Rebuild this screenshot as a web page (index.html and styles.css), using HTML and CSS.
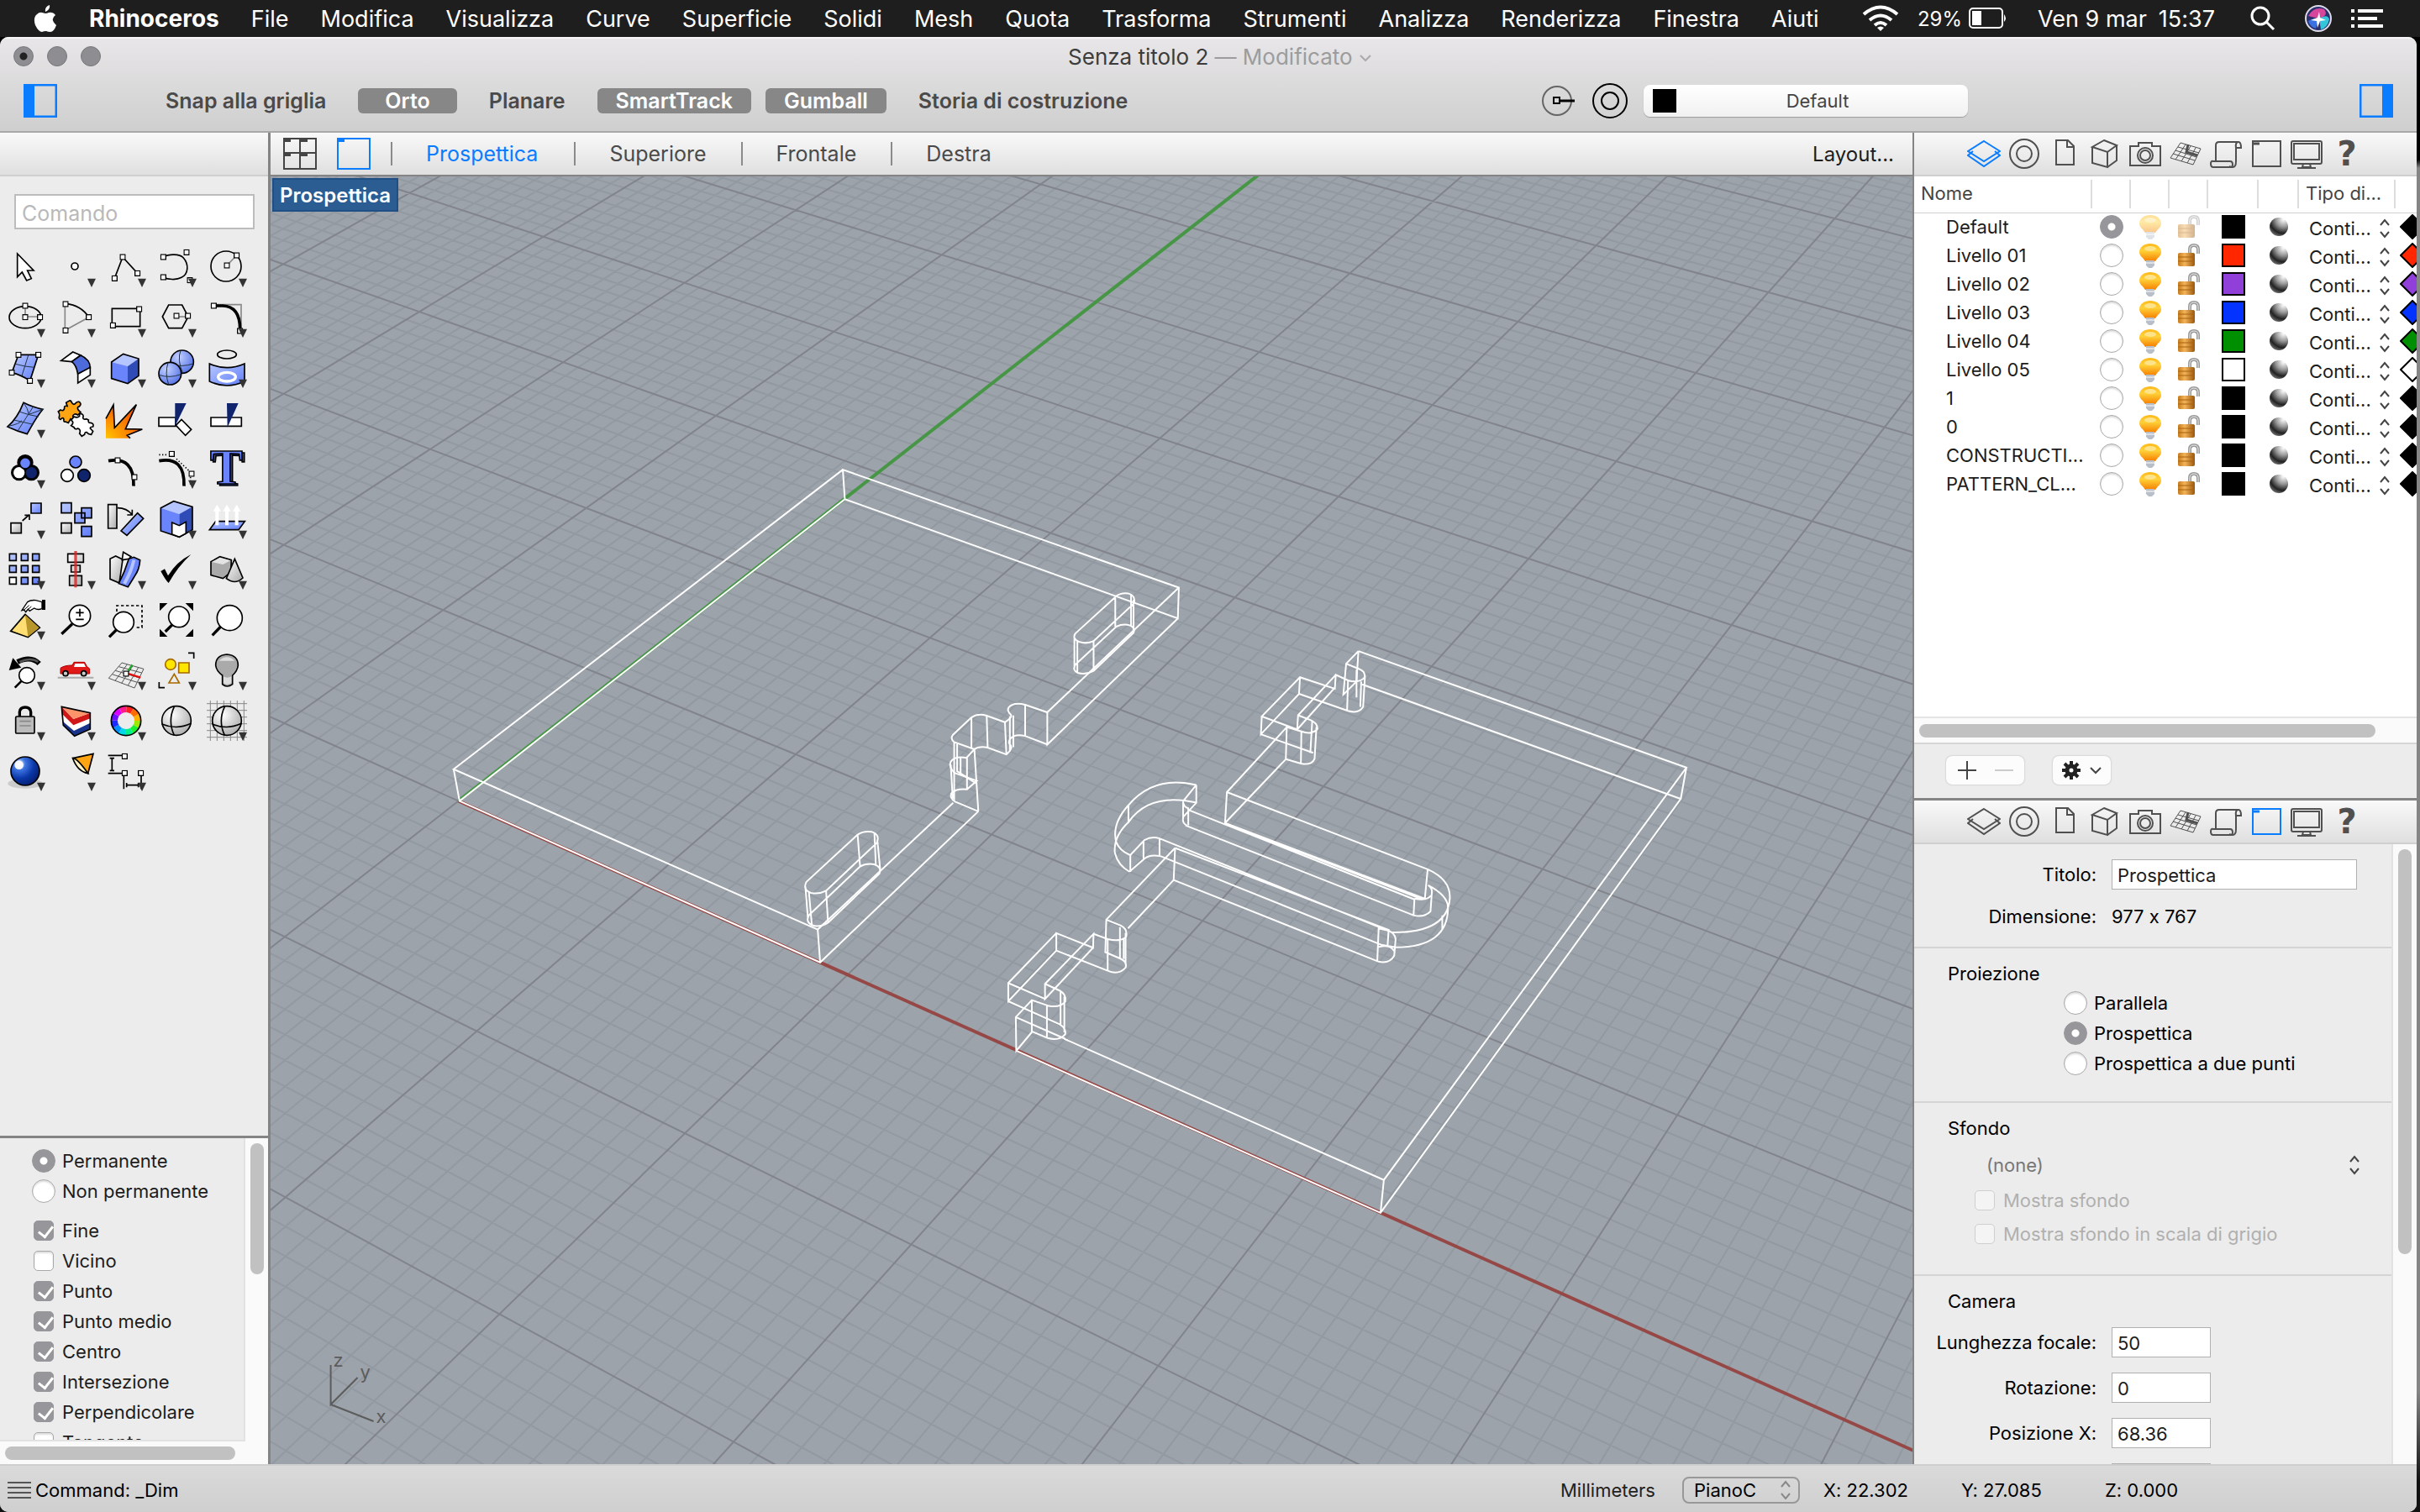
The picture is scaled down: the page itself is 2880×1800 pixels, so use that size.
FILE: index.html
```html
<!DOCTYPE html>
<html lang="it">
<head>
    <meta charset="utf-8">
    <title>Senza titolo 2</title>
    <link rel="stylesheet" href="styles.css">
</head>
<body>
    <!-- shared icons -->
    <svg class="defs" width="0" height="0">
        <defs>
            <linearGradient id="blue" x1="0" y1="0" x2="1" y2="1"><stop offset="0" stop-color="#b9c9ff"/><stop offset="1" stop-color="#5f7dfa"/></linearGradient>
            <linearGradient id="grey" x1="0" y1="0" x2="1" y2="1"><stop offset="0" stop-color="#fff"/><stop offset="1" stop-color="#aaa"/></linearGradient>
            <linearGradient id="bulbFill" x1="0" y1="0" x2="0" y2="1"><stop offset="0" stop-color="#ffb81a"/><stop offset="0.4" stop-color="#ffd23a"/><stop offset="1" stop-color="#f77f00"/></linearGradient>
            <linearGradient id="lockFill" x1="0" y1="0" x2="1" y2="0"><stop offset="0" stop-color="#c4791a"/><stop offset="0.4" stop-color="#f3b45a"/><stop offset="1" stop-color="#9a560c"/></linearGradient>
            <radialGradient id="ball" cx="0.35" cy="0.3" r="0.75"><stop offset="0" stop-color="#c4d2ff"/><stop offset="1" stop-color="#5472e6"/></radialGradient>
            <radialGradient id="ballGrey" cx="0.35" cy="0.3" r="0.8"><stop offset="0" stop-color="#fff"/><stop offset="1" stop-color="#a8a8a8"/></radialGradient>
            <radialGradient id="ballDark" cx="0.3" cy="0.25" r="0.85"><stop offset="0" stop-color="#fff"/><stop offset="0.25" stop-color="#3d74e0"/><stop offset="0.6" stop-color="#0a37a8"/><stop offset="1" stop-color="#041a66"/></radialGradient>
            <radialGradient id="sphere" cx="0.75" cy="0.1" r="1"><stop offset="0" stop-color="#fff"/><stop offset="0.4" stop-color="#999"/><stop offset="0.75" stop-color="#222"/><stop offset="1" stop-color="#777"/></radialGradient>
            <radialGradient id="burst" cx="0" cy="1" r="1"><stop offset="0" stop-color="#ffc400"/><stop offset="1" stop-color="#f95d00"/></radialGradient>
        </defs>
        <symbol id="dd" viewBox="0 0 180 180"><path d="M132 131h30l-15 31z" fill="#333"/></symbol>
        <symbol id="sq" viewBox="0 0 22 22"><rect x="2" y="2" width="18" height="18" fill="#fff" stroke="#000" stroke-width="4"/></symbol>
        <symbol id="layers" viewBox="0 0 40 40"><path d="M20 5L39 17 20 29 1 17zM7 17L1 22 20 35 39 22 33 17"/></symbol>
        <symbol id="target" viewBox="0 0 40 40"><circle cx="20" cy="20" r="17"/><circle cx="20" cy="20" r="9"/></symbol>
        <symbol id="page" viewBox="0 0 40 40"><path d="M10 4h14l7 7v22H10zM23 4v8h8"/></symbol>
        <symbol id="cube" viewBox="0 0 40 40"><path d="M19 4L34 10 23 18 5 12zM5 12V31L23 36V18M23 36L34 28V10"/></symbol>
        <symbol id="camera" viewBox="0 0 40 40"><path d="M2 11H12V7H28V11H38V34H2z"/><circle cx="20" cy="22" r="9"/><circle cx="20" cy="22" r="6"/></symbol>
        <symbol id="cplane" viewBox="0 0 40 40"><path stroke-width="1" d="M14 7L38 14 29 33 2 25zM20 9L8 27M26 11L15 29M32 13L22 31M11 12L36 19M8 16L33 24M5 20L31 28"/><path stroke-width="3" d="M23 9L21 18 34 22"/></symbol>
        <symbol id="scroll" viewBox="0 0 40 40"><path d="M8 29V10q0-4 4-4h23q3 0 3 7h-6v16q0 7-4 7H5q-3 0-3-4t3-3h20q3 0 3 4t-4 2M35 6q-4 0-3 7"/></symbol>
        <symbol id="win" viewBox="0 0 40 40"><rect x="4" y="5" width="33" height="30"/><path stroke-width="3" d="M5 8h7"/></symbol>
        <symbol id="monitor" viewBox="0 0 40 40"><rect x="2" y="5" width="36" height="27" rx="2"/><rect x="5" y="8" width="30" height="19"/><path d="M16 32l-1 4h10l-1-4M9 37h22"/></symbol>
        <symbol id="bulb" viewBox="0 0 28 30">
            <path d="M14 1C7 1 1 5 1 11q0 4 4 7l3 4h12l3-4q4-3 4-7C27 5 21 1 14 1z" fill="url(#bulbFill)"/>
            <ellipse cx="14" cy="7" rx="7" ry="3" fill="#ffe38a"/><path d="M9 21h10v6l-3 3h-4l-3-3z" fill="#b9bfc8"/><path d="M9 24h10" stroke="#fff"/>
        </symbol>
        <symbol id="lock" viewBox="0 0 28 28">
            <path d="M15 12V7q0-5 5-5t5 5v5" fill="none" stroke="#9a9a9a" stroke-width="4"/><path d="M15 12V7q0-5 5-5t5 5v5" fill="none" stroke="#eee" stroke-width="1"/>
            <rect x="1" y="11" width="20" height="16" rx="2" fill="url(#lockFill)"/><path d="M1 16h20M1 21h20" stroke="#a8630f"/>
        </symbol>
        <symbol id="mat" viewBox="0 0 24 24"><circle cx="12" cy="12" r="11" fill="url(#sphere)"/></symbol>
    </svg>

    <nav class="menubar">
        <svg class="apple" viewBox="0 0 28 34"><path fill="#fff" d="M19 1q1 5-5 8-1-6 5-8zM14 11q2 0 4-1 5-1 8 3-7 5 1 12-3 8-7 8-3 0-5-1-3 0-5 1-4 0-8-8-3-9 2-13 3-3 6-2z"/></svg>
        <a class="app" href="#">Rhinoceros</a>
        <a href="#">File</a>
        <a href="#">Modifica</a>
        <a href="#">Visualizza</a>
        <a href="#">Curve</a>
        <a href="#">Superficie</a>
        <a href="#">Solidi</a>
        <a href="#">Mesh</a>
        <a href="#">Quota</a>
        <a href="#">Trasforma</a>
        <a href="#">Strumenti</a>
        <a href="#">Analizza</a>
        <a href="#">Renderizza</a>
        <a href="#">Finestra</a>
        <a href="#">Aiuti</a>
        <div class="status">
            <svg width="44" height="32" viewBox="0 0 44 32" fill="none" stroke="#fff" stroke-width="4"><path d="M2 11q20-17 40 0M9 18q13-11 26 0M15 24q7-6 14 0"/><path d="M18 27q4-3 8 0l-4 4z" fill="#fff" stroke="none"/></svg>
            <span class="charge">29%</span>
            <svg class="battery" width="46" height="26" viewBox="0 0 46 26"><rect x="1" y="1" width="39" height="23" rx="4" fill="none" stroke="#fff" stroke-width="2"/><rect x="4" y="4" width="11" height="17" fill="#fff"/><path d="M42 8q4 5 0 9z" fill="#fff"/></svg>
            <span>Ven 9 mar</span>
            <span class="clock">15:37</span>
            <svg class="find" width="30" height="30" viewBox="0 0 30 30" fill="none" stroke="#fff" stroke-width="3"><circle cx="12" cy="12" r="10"/><path d="M19 19l9 9"/></svg>
            <svg class="siri" width="34" height="34" viewBox="0 0 34 34"><circle cx="17" cy="17" r="15" fill="#2b2f6e" stroke="#dcdcea" stroke-width="2"/><path d="M5 14Q12 2 24 6q6 8-7 11z" fill="#d6479c"/><path d="M18 17q10-6 12 1-2 10-10 12z" fill="#33c6d8"/><path d="M5 20q8-4 12-3l-3 12q-7-2-9-9z" fill="#3a72e0"/><path d="M18 9l1 7 7 3-7 1-3 8-1-8-7-1 8-3z" fill="#fff"/></svg>
            <svg width="38" height="22" viewBox="0 0 38 22"><path d="M0 2h4M8 2h30M0 11h4M8 11h23M0 20h4M8 20h30" stroke="#fff" stroke-width="4"/></svg>
        </div>
    </nav>

    <div class="window">
        <header class="titlebar">
            <div class="title-row">
                <div class="lights"><span class="light dirty"></span><span class="light"></span><span class="light"></span></div>
                <div class="title">Senza titolo 2 <span>— Modificato</span> <svg width="16" height="12" viewBox="0 0 16 12"><path d="M2 1l6 6 6-6" fill="none" stroke="#aaa" stroke-width="2"/></svg></div>
            </div>
            <div class="toolbar">
                <button class="panel-btn" aria-label="Pannello sinistro"><svg width="40" height="40" viewBox="0 0 40 40"><path d="M1 1h38v38H1z" fill="none" stroke="#0a7cff" stroke-width="3"/><path d="M0 0h13v40H0z" fill="#0a7cff"/></svg></button>
                <button class="mode">Snap alla griglia</button>
                <button class="mode on orto">Orto</button>
                <button class="mode">Planare</button>
                <button class="mode on">SmartTrack</button>
                <button class="mode on">Gumball</button>
                <button class="mode">Storia di costruzione</button>
                <div class="right-tools">
                    <svg width="42" height="42" viewBox="0 0 42 42" fill="none"><circle cx="19" cy="21" r="17" stroke="#666" stroke-width="2"/><rect x="15" y="17" width="7" height="7" stroke="#000" stroke-width="2"/><path d="M22 21h18" stroke="#000" stroke-width="3"/></svg>
                    <svg width="42" height="42" viewBox="0 0 42 42" fill="none" stroke="#000" stroke-width="2"><circle cx="21" cy="21" r="20"/><circle cx="21" cy="21" r="10"/></svg>
                    <button class="layer-btn"><i></i><span>Default</span></button>
                </div>
                <button class="panel-btn" aria-label="Pannello destro"><svg width="40" height="40" viewBox="0 0 40 40"><path d="M1 1h38v38H1z" fill="none" stroke="#0a7cff" stroke-width="3"/><path d="M27 0h13v40H27z" fill="#0a7cff"/></svg></button>
            </div>
        </header>

        <main class="work">
            <aside class="left">
                <div class="strip"></div>
                <div class="cmd"><input type="text" placeholder="Comando" aria-label="Comando"></div>
                <div class="tools">
                    <button><svg viewBox="0 0 180 180"><path d="M62 42V125L79 108 95 138 112 131 98 102H120z" fill="#fff"/></svg></button>
                    <button><svg viewBox="0 0 180 180"><circle cx="87" cy="87" r="12" fill="#fff"/><use href="#dd"/></svg></button>
                    <button><svg viewBox="0 0 180 180"><path d="M49 130L78 54 131 112"/><use href="#sq" x="38" y="119" width="22" height="22"/><use href="#sq" x="67" y="43" width="22" height="22"/><use href="#sq" x="120" y="101" width="22" height="22"/><use href="#dd"/></svg></button>
                    <button><svg viewBox="0 0 180 180"><path d="M43 54C60 44 100 40 115 57 135 80 133 115 108 127 90 137 60 135 43 126"/><use href="#sq" x="32" y="43" width="22" height="22"/><use href="#sq" x="32" y="115" width="22" height="22"/><use href="#sq" x="115" y="26" width="22" height="22"/><use href="#sq" x="127" y="126" width="22" height="22"/><use href="#dd"/></svg></button>
                    <button><svg viewBox="0 0 180 180"><circle cx="87" cy="87" r="54"/><path d="M90 84L125 48" stroke="#888"/><use href="#sq" x="79" y="73" width="22" height="22"/><use href="#sq" x="114" y="37" width="22" height="22"/><use href="#dd"/></svg></button>

                    <button><svg viewBox="0 0 180 180"><ellipse cx="90" cy="89" rx="57" ry="39"/><path d="M90 48V87H143" stroke="#888"/><use href="#sq" x="79" y="37" width="22" height="22"/><use href="#sq" x="79" y="78" width="22" height="22"/><use href="#sq" x="132" y="78" width="22" height="22"/><use href="#dd"/></svg></button>
                    <button><svg viewBox="0 0 180 180"><path d="M52 42V136L137 89" stroke="#888"/><path d="M54 40Q110 46 137 89"/><use href="#sq" x="43" y="31" width="22" height="22"/><use href="#sq" x="126" y="78" width="22" height="22"/><use href="#sq" x="43" y="125" width="22" height="22"/><use href="#dd"/></svg></button>
                    <button><svg viewBox="0 0 180 180"><path d="M40 58H140V122H40z"/><use href="#sq" x="126" y="49" width="22" height="22"/><use href="#sq" x="32" y="107" width="22" height="22"/><use href="#dd"/></svg></button>
                    <button><svg viewBox="0 0 180 180"><path d="M40 87L62 45H110L132 87 110 128H62z"/><path d="M90 87h40" stroke="#888"/><use href="#sq" x="79" y="73" width="22" height="22"/><use href="#sq" x="120" y="73" width="22" height="22"/><use href="#dd"/></svg></button>
                    <button><svg viewBox="0 0 180 180"><path d="M43 44H141V132" stroke="#888"/><path d="M43 48H75Q137 50 137 132" stroke-width="11"/><use href="#sq" x="32" y="37" width="22" height="22"/><use href="#sq" x="126" y="127" width="22" height="22"/><use href="#dd"/></svg></button>

                    <button><svg viewBox="0 0 180 180"><path d="M66 43H137L107 136Q75 115 42 107z" fill="url(#blue)"/><path d="M101 45L78 118M55 76Q90 86 122 88" stroke="#234" stroke-width="3"/><use href="#sq" x="55" y="32" width="22" height="22"/><use href="#sq" x="126" y="32" width="22" height="22"/><use href="#sq" x="96" y="125" width="22" height="22"/><use href="#sq" x="31" y="96" width="22" height="22"/><use href="#dd"/></svg></button>
                    <button><svg viewBox="0 0 180 180"><path d="M38 64L80 33 108 45 76 68z" fill="#fff"/><path d="M76 68L108 45Q142 60 142 90L98 112Q92 78 76 68z" fill="#4d6bdb"/><path d="M98 112L142 88V115L98 144z" fill="#fff"/><use href="#dd"/></svg></button>
                    <button><svg viewBox="0 0 180 180"><path d="M38 69L80 40 135 57 96 84z" fill="#b5c5ff" stroke="none"/><path d="M38 69L96 84V146L38 128z" fill="#6a84fb" stroke="none"/><path d="M96 84L135 57V118L96 146z" fill="#2f4bb5" stroke="none"/><path d="M38 69L80 40 135 57V118L96 146 38 128z"/><use href="#dd"/></svg></button>
                    <button><svg viewBox="0 0 180 180"><circle cx="110" cy="68" r="41" fill="url(#ball)"/><path d="M70 78Q110 88 150 75M105 28Q92 60 112 108" stroke="#234" stroke-width="3"/><circle cx="67" cy="110" r="40" fill="url(#ball)"/><path d="M28 115Q65 128 106 113M60 71Q48 110 62 149" stroke="#234" stroke-width="3"/><use href="#dd"/></svg></button>
                    <button><svg viewBox="0 0 180 180"><ellipse cx="90" cy="42" rx="34" ry="15"/><path d="M28 75Q90 103 153 75V138Q90 168 28 138z" fill="url(#blue)"/><ellipse cx="90" cy="122" rx="31" ry="16" stroke="#fff" stroke-width="10"/><use href="#dd"/></svg></button>

                    <button><svg viewBox="0 0 180 180"><path d="M84 34Q115 50 153 58 130 85 97 146 60 136 27 120 62 90 84 34z" fill="url(#blue)"/><path d="M119 48Q95 85 64 134M68 66Q100 78 138 84M50 96Q85 104 118 112M84 34Q100 55 103 76L153 58M30 118Q70 110 78 98" stroke="#234" stroke-width="3"/><use href="#dd"/></svg></button>
                    <button><svg viewBox="0 0 180 180"><path d="M60 46L56 34 68 27Q74 26 76 34 84 46 92 34 104 26 108 38 108 46 98 50 94 58 108 68L98 78Q84 70 80 82 84 94 72 92L64 106 54 102Q46 104 48 94 46 84 36 94 28 92 32 82 34 74 28 66L36 60Q48 66 50 54 48 44 60 46z" fill="#ffa412"/><path d="M78 92L84 84Q96 90 104 82 102 72 112 74 120 78 116 88 118 96 128 92L136 96Q134 108 144 106 156 108 152 120 142 120 142 126L152 136 146 148Q134 146 130 140 122 138 122 148L112 154 104 144Q110 130 98 126 88 132 84 122L74 116Q84 108 78 100 70 96 78 92z" fill="#fff"/></svg></button>
                    <button><svg viewBox="0 0 180 180"><path d="M18 91L45 42 49 124 127 41 88 128 148 129 94 151 105 161H18z" fill="url(#burst)" stroke="none"/><path d="M18 91L45 42 49 124 127 41 88 128 148 129 94 151 105 161"/></svg></button>
                    <button><svg viewBox="0 0 180 180"><path d="M27 87H87V118H27z" fill="#fff"/><path d="M85 36H125L85 118z" fill="#10246e" stroke="none"/><path d="M88 115L108 94 143 130 122 151z" fill="#fff"/></svg></button>
                    <button><svg viewBox="0 0 180 180"><path d="M33 87H142V118H33z" fill="#fff"/><path d="M90 36H131L92 122z" fill="#10246e" stroke="none"/></svg></button>

                    <button><svg viewBox="0 0 180 180"><g stroke-width="18"><circle cx="90" cy="68" r="20"/><circle cx="68" cy="104" r="20"/><circle cx="112" cy="104" r="20"/></g><circle cx="68" cy="104" r="20" fill="#fff" stroke="none"/><circle cx="112" cy="104" r="20" fill="#10246e" stroke="none"/><circle cx="90" cy="70" r="20" fill="#6a84fb"/><use href="#dd"/></svg></button>
                    <button><svg viewBox="0 0 180 180"><circle cx="90" cy="66" r="21" fill="#6a84fb"/><circle cx="60" cy="114" r="22" fill="#fff"/><circle cx="120" cy="114" r="22" fill="#10246e"/></svg></button>
                    <button><svg viewBox="0 0 180 180"><path d="M27 62Q120 45 117 152" stroke-width="11"/><use href="#sq" x="49" y="49" width="22" height="22"/><use href="#sq" x="109" y="109" width="22" height="22"/></svg></button>
                    <button><svg viewBox="0 0 180 180"><path d="M28 62Q120 45 117 152" stroke-width="11"/><path d="M28 40H60M90 55L138 100M140 120V150" stroke-dasharray="4 7"/><use href="#sq" x="62" y="26" width="22" height="22"/><use href="#sq" x="133" y="97" width="22" height="22"/><use href="#dd"/></svg></button>
                    <button><svg viewBox="0 0 180 180"><text class="tee" x="38" y="149">T</text><text class="tee front" x="30" y="143">T</text></svg></button>

                    <button><svg viewBox="0 0 180 180"><path d="M39 104H76V140H39z" fill="url(#grey)"/><path d="M111 33H147V69H111z" fill="url(#blue)"/><path d="M80 96L105 74M88 76H105V93"/><use href="#dd"/></svg></button>
                    <button><svg viewBox="0 0 180 180"><path d="M39 32H75V68H39zM111 50H147V86H111zM87 68H123V104H87zM111 116H147V152H111z" fill="url(#blue)"/><path d="M39 104H75V140H39z" fill="url(#grey)"/></svg></button>
                    <button><svg viewBox="0 0 180 180"><path d="M26 38H57V123H26z" fill="url(#grey)"/><path d="M72 132L131 68 152 88 93 148z" fill="url(#blue)"/><path d="M60 50Q92 50 112 74M112 56V75H94"/></svg></button>
                    <button><svg viewBox="0 0 180 180"><path d="M34 50L80 26 147 46 100 72z" fill="#b5c5ff" stroke="none"/><path d="M34 50L100 72V154L34 132z" fill="#6a84fb" stroke="none"/><path d="M100 72L147 46V128L100 154z" fill="#2f4bb5" stroke="none"/><path d="M34 50L80 26 147 46V128L100 154 34 132z"/><path d="M74 102L100 113 124 100V141L100 154 74 144z" fill="#fff"/><use href="#dd"/></svg></button>
                    <button><svg viewBox="0 0 180 180"><path d="M28 128L50 98H154L132 128z" fill="url(#blue)"/><path d="M55 112V50M90 112V50M125 112V50" stroke="#fff" stroke-width="12"/><path d="M41 62L55 38 69 62zM76 62L90 38 104 62zM111 62L125 38 139 62z" fill="#fff" stroke="none"/><use href="#dd"/></svg></button>

                    <button><svg viewBox="0 0 180 180"><path d="M34 34H58V58H34zM76 34H100V58H76zM116 34H140V58H116zM34 76H58V100H34zM76 76H100V100H76zM116 76H140V100H116zM76 118H100V142H76zM116 118H140V142H116z" fill="url(#blue)"/><path d="M34 118H58V142H34z" fill="#fff"/><use href="#dd"/></svg></button>
                    <button><svg viewBox="0 0 180 180"><path d="M62 34H118V64H62zM74 75H106V99H74zM68 112H112V147H68z" fill="url(#grey)"/><path d="M90 24V154" stroke="#d22" stroke-width="10" opacity="0.8"/><use href="#dd"/></svg></button>
                    <button><svg viewBox="0 0 180 180"><path d="M33 52L53 42 78 54 66 138 33 124z" fill="url(#grey)"/><path d="M80 28L108 44 100 52 76 56z" fill="#fff"/><path d="M100 52L118 46 140 56Q138 90 120 115L97 152 64 140Q85 100 100 52z" fill="#6a84fb"/><path d="M118 56Q108 100 84 140" stroke="#b5c5ff" stroke-width="12"/><use href="#dd"/></svg></button>
                    <button><svg viewBox="0 0 180 180"><path d="M34 96L48 88 60 112Q90 62 142 36 96 78 62 138 52 130 34 96z" fill="#000" stroke="none"/><use href="#dd"/></svg></button>
                    <button><svg viewBox="0 0 180 180"><path d="M33 62L65 44 106 56 104 100 76 122 33 110z" fill="#aaa"/><path d="M36 63L65 47 103 58 76 72z" fill="#e4e4e4" stroke="none"/><path d="M118 52L147 120Q120 146 88 122z" fill="url(#grey)"/><use href="#dd"/></svg></button>

                    <button><svg viewBox="0 0 180 180"><path d="M90 70L38 130 100 152 142 118z" fill="#ffdf73"/><path d="M90 72L100 150 140 118z" fill="#b8962a" stroke="none"/><path d="M78 56L98 26Q110 18 128 20L150 26V50Q134 56 122 48L106 58 100 52 92 62 86 54z" fill="#fff" stroke-width="4"/><path d="M86 54L104 38M94 58L112 42" stroke-width="3"/><path d="M150 18h12v36h-12z" fill="#000" stroke="none"/><use href="#dd"/></svg></button>
                    <button><svg viewBox="0 0 180 180"><circle cx="105" cy="75" r="38" fill="#fff"/><path d="M91 64H119M105 50V78M91 88H119"/><path d="M78 104L40 140" stroke-width="10"/></svg></button>
                    <button><svg viewBox="0 0 180 180"><path d="M57 60V39H147V117H120" stroke-dasharray="10 8"/><circle cx="81" cy="98" r="37" fill="#fff"/><path d="M55 126L30 151" stroke-width="10"/></svg></button>
                    <button><svg viewBox="0 0 180 180"><circle cx="99" cy="79" r="37" fill="#fff"/><path d="M76 106L50 132" stroke-width="10"/><path d="M30 30H58L30 58zM150 30V58L122 30zM30 150V122L58 150zM150 150H122L150 122z" fill="#000" stroke="none"/></svg></button>
                    <button><svg viewBox="0 0 180 180"><circle cx="100" cy="83" r="45" fill="#fff"/><path d="M68 114L38 145" stroke-width="10"/></svg></button>

                    <button><svg viewBox="0 0 180 180"><circle cx="96" cy="108" r="28" fill="#fff"/><path d="M77 128L53 152" stroke-width="8"/><path d="M140 66Q110 36 62 60" stroke-width="18"/><path d="M136 60Q110 42 70 60" stroke="#555" stroke-width="8"/><path d="M32 90L46 46 76 80z" fill="#000" stroke="none"/><use href="#dd"/></svg></button>
                    <button><svg viewBox="0 0 180 180"><path d="M26 116H154" stroke="#aaa" stroke-width="6"/><path d="M36 82Q50 72 78 72L84 61H122L130 76 140 84V102H36z" fill="#e01818" stroke="#a00" stroke-width="3"/><path d="M88 66H120L126 78H84z" fill="#fff" stroke="none"/><circle cx="54" cy="101" r="9" fill="#ccc"/><circle cx="119" cy="101" r="9" fill="#ccc"/><use href="#dd"/></svg></button>
                    <button><svg viewBox="0 0 180 180"><path d="M75 63L153 85 120 153 28 118zM94 69L51 127M114 74L74 136M134 80L97 144M64 77L146 99M52 91L139 117M40 104L130 133" stroke="#555" stroke-width="3"/><path d="M92 100L142 116" stroke="#d11" stroke-width="7"/><path d="M98 92L112 70" stroke="#2a2" stroke-width="7"/><use href="#sq" x="79" y="91" width="22" height="22"/><use href="#dd"/></svg></button>
                    <button><svg viewBox="0 0 180 180"><g stroke="#a56a00"><circle cx="69" cy="69" r="19" fill="#ffe600"/><path d="M98 63H135V99H98z" fill="#ffe600"/><path d="M82 103L100 135H63z"/></g><path d="M132 28H152V48M28 132V152H48"/><use href="#dd"/></svg></button>
                    <button><svg viewBox="0 0 180 180"><path d="M90 33Q130 36 130 72 128 92 110 108V140Q90 154 74 140V108Q52 92 50 72 50 36 90 33z" fill="#aaa"/><path d="M62 56Q90 30 118 56M78 112Q90 120 106 112V136Q90 144 78 136z" stroke="none" fill="#ddd"/><use href="#dd"/></svg></button>

                    <button><svg viewBox="0 0 180 180"><path d="M70 74V58Q72 42 90 42T110 58V74" stroke-width="10"/><rect x="56" y="75" width="67" height="60" rx="4" fill="#bbb"/><path d="M70 92H110M70 108H110" stroke="#888"/><use href="#dd"/></svg></button>
                    <button><svg viewBox="0 0 180 180"><path d="M40 40L142 62V120L86 145 46 106z" fill="#fff" stroke="none"/><path d="M40 40L82 84 142 62V82L82 106 42 66z" fill="#d11818" stroke="none"/><path d="M40 40L142 62 82 84z" fill="#ff946a" stroke="none"/><path d="M44 92L84 126 142 98V120L86 145 46 106z" fill="#17348a" stroke="none"/><path d="M40 40L142 62V120L86 145 46 106z"/><use href="#dd"/></svg></button>
                    <button><svg viewBox="0 0 180 180"><g class="wheel" stroke-width="24"><circle cx="90" cy="90" r="42" pathLength="12" stroke="#ffb000" stroke-dashoffset="1"/><circle cx="90" cy="90" r="42" pathLength="12" stroke="#9be800" stroke-dashoffset="0"/><circle cx="90" cy="90" r="42" pathLength="12" stroke="#19f02b" stroke-dashoffset="-1"/><circle cx="90" cy="90" r="42" pathLength="12" stroke="#00f08c" stroke-dashoffset="-2"/><circle cx="90" cy="90" r="42" pathLength="12" stroke="#00d8e8" stroke-dashoffset="-3"/><circle cx="90" cy="90" r="42" pathLength="12" stroke="#0090ff" stroke-dashoffset="-4"/><circle cx="90" cy="90" r="42" pathLength="12" stroke="#1a2cff" stroke-dashoffset="-5"/><circle cx="90" cy="90" r="42" pathLength="12" stroke="#6a10ff" stroke-dashoffset="-6"/><circle cx="90" cy="90" r="42" pathLength="12" stroke="#d800ff" stroke-dashoffset="-7"/><circle cx="90" cy="90" r="42" pathLength="12" stroke="#ff1a90" stroke-dashoffset="-8"/><circle cx="90" cy="90" r="42" pathLength="12" stroke="#ff2020" stroke-dashoffset="-9"/><circle cx="90" cy="90" r="42" pathLength="12" stroke="#ff6a00" stroke-dashoffset="-10"/></g><circle cx="90" cy="90" r="53"/><use href="#dd"/></svg></button>
                    <button><svg viewBox="0 0 180 180"><circle cx="90" cy="90" r="52" fill="url(#ballGrey)"/><path d="M38 102Q90 124 142 100M82 40Q58 90 82 142"/></svg></button>
                    <button><svg viewBox="0 0 180 180"><path d="M31 18V162M55 18V162M79 18V162M103 18V162M127 18V162M151 18V162M18 29H162M18 53H162M18 77H162M18 101H162M18 125H162M18 149H162" stroke="#888" stroke-width="3"/><circle cx="90" cy="90" r="52" fill="url(#ballGrey)"/><path d="M38 102Q90 124 142 100M82 40Q58 90 82 142"/><use href="#dd"/></svg></button>

                    <button><svg viewBox="0 0 180 180"><ellipse cx="90" cy="134" rx="62" ry="18" fill="#ccc" stroke="none"/><circle cx="90" cy="90" r="51" fill="url(#ballDark)"/><circle cx="68" cy="68" r="16" fill="#fff" stroke="none" opacity="0.9"/><use href="#dd"/></svg></button>
                    <button><svg viewBox="0 0 180 180"><path d="M80 44L153 28 134 98Q100 90 80 44z" fill="#ffa412"/><path d="M80 44Q96 44 134 98 96 90 80 44z" fill="#fff2c4"/><use href="#dd"/></svg></button>
                    <button><svg viewBox="0 0 180 180"><path d="M26 34H76M26 98H76M40 44V88M32 44H48M32 88H48M82 106V154M144 106V154M92 140H134M92 132V148M134 132V148"/><use href="#sq" x="74" y="26" width="22" height="22"/><use href="#sq" x="74" y="86" width="22" height="22"/><use href="#sq" x="132" y="86" width="22" height="22"/><use href="#dd"/></svg></button>
                </div>
                <div class="osnap">
                    <div class="osnap-list">
                        <label><input type="radio" name="snap" checked>Permanente</label>
                        <label class="last-radio"><input type="radio" name="snap">Non permanente</label>
                        <label><input type="checkbox" checked>Fine</label>
                        <label><input type="checkbox">Vicino</label>
                        <label><input type="checkbox" checked>Punto</label>
                        <label><input type="checkbox" checked>Punto medio</label>
                        <label><input type="checkbox" checked>Centro</label>
                        <label><input type="checkbox" checked>Intersezione</label>
                        <label><input type="checkbox" checked>Perpendicolare</label>
                        <label><input type="checkbox">Tangente</label>
                    </div>
                    <div class="vtrack"><i></i></div>
                    <div class="htrack"><i></i></div>
                </div>
            </aside>

            <section class="center">
                <div class="strip views">
                    <button aria-label="Quattro viste"><svg width="40" height="38" viewBox="0 0 40 38" fill="none" stroke="#444" stroke-width="2"><path d="M1 1h38v36H1zM20 1v36M1 18h38"/><path d="M1 3h8M20 3h9M1 20h8M20 20h9" stroke-width="4"/></svg></button>
                    <button aria-label="Vista singola"><svg width="40" height="38" viewBox="0 0 40 38" fill="none" stroke="#0a7cff" stroke-width="2"><path d="M1 1h38v36H1z"/><path d="M1 3h8" stroke-width="4"/></svg></button>
                    <a class="current" href="#">Prospettica</a>
                    <a href="#">Superiore</a>
                    <a href="#">Frontale</a>
                    <a href="#">Destra</a>
                    <button class="layout">Layout...</button>
                </div>
                <div class="viewport">
                    <svg class="scene" viewBox="322 209 1956 1534" preserveAspectRatio="xMidYMid slice" fill="none">
                        <path id="minor" stroke="#9299a1" stroke-width="2"/>
                        <path id="major" stroke="#82848c" stroke-width="2"/>
                        <path id="axisX" stroke="#964846" stroke-width="4"/>
                        <path id="axisY" stroke="#469646" stroke-width="4"/>
                        <!-- left part -->
                        <g class="wire" transform="translate(521 540) scale(0.5867 0.4082)">
                            <path d="M823 45L33 919 772 1387 1047 1017M33 919L45 1012 777 1483 1098 1042M772 1387L777 1483M45 1012L827 131 823 45 1505 389 1503 479 827 131M1505 389L1238 753V847L1503 479"/>
                            <path d="M1295 523L1378 414Q1388 403 1402 406 1418 412 1414 435L1332 545Q1318 555 1302 547 1288 538 1295 523zM1295 614L1378 503Q1392 494 1405 499 1417 506 1413 521L1332 632Q1316 645 1300 638 1288 630 1295 614zM1293 535V625M1299 545V638M1332 545V632M1376 416V503M1408 410V500M1413 425V515"/>
                            <path d="M749 1248L853 1110Q865 1098 882 1102 899 1110 892 1134L789 1274Q775 1285 758 1280 741 1270 749 1248zM755 1344L858 1203Q870 1193 887 1197 903 1205 897 1224L793 1367Q775 1383 760 1374 746 1363 755 1344zM747 1262L752 1352M754 1276L760 1372M789 1274L793 1367M853 1110L858 1203M887 1104L890 1198M893 1125L899 1215"/>
                            <path d="M1238 753L1193 731Q1170 722 1160 738 1155 748 1164 760 1168 768 1152 782L1115 763Q1098 755 1084 768L1047 818Q1040 830 1049 840L1090 861 1074 886Q1050 880 1042 897 1037 912 1050 930L1095 953 1075 978Q1052 975 1043 990 1040 1005 1051 1014L1098 1042"/>
                            <path d="M1238 847L1193 822Q1172 815 1163 830 1157 842 1164 850 1168 860 1155 876L1117 856Q1100 850 1088 862M1049 840V1010M1055 845V925L1093 960M1090 861L1098 1042M1084 768V858M1115 763L1117 856M1152 782L1155 876M1162 765V868M1169 762V855M1193 731V822M1075 886V978M1042 905L1046 1005M1062 884V935"/>
                        </g>
                        <!-- right part -->
                        <g class="wire" transform="translate(1161 740) scale(0.5612 0.4719)">
                            <path d="M814 73L1510 367 868 1408 190 1052M822 157L1498 446 861 1491 88 1082M1510 367L1498 446M868 1408L861 1491M814 73L788 105 782 183 810 150 814 73"/>
                            <path d="M788 105L815 118Q830 125 827 140 815 155 792 147L766 133 764 168 690 139 609 238 684 271 762 168M766 133L686 235 684 271M690 139L688 181 792 224Q815 232 824 214L828 135M792 147L790 224M810 120V190M820 150L818 214M688 181L607 283 609 238M607 283L718 330"/>
                            <path d="M686 235L712 247Q728 255 727 270 715 285 693 276L662 265 660 346 692 357Q715 362 721 345L725 265M693 276L692 355M716 250L712 330M662 265L535 429 531 507 660 346"/>
                            <path d="M535 429L961 624Q1010 650 1008 697 1003 785 885 783M962 664Q1004 690 1004 720 1005 820 893 821L865 815M531 507L955 698 961 624M538 511L948 699M992 740V775M933 698L931 740Q952 747 967 730L970 680Q970 670 962 664M933 698Q960 704 968 690M447 513L931 740M453 474L933 700"/>
                            <path d="M470 411Q380 385 326 462 290 510 300 555 308 578 330 588V630M468 455Q370 430 326 505 295 540 297 580 302 612 328 630M470 411V456L442 492M470 411L442 452V495Q440 508 450 513M442 452Q442 466 453 470V513M326 462V507"/>
                            <path d="M330 588L360 550Q375 540 392 546L885 783M328 630L360 597Q372 585 395 591L870 818M358 552V597M392 546V590M425 570L422 651 857 857Q880 863 890 842L893 800Q890 782 875 778L857 773 854 857M425 570L880 778M878 780L876 815M857 820Q880 812 890 830"/>
                            <path d="M425 570L279 751 277 833 310 850Q324 858 320 872 305 892 282 880L173 829V785L251 822 252 787 149 913V951L251 822M422 651L325 773M279 751L310 766Q325 775 321 795 308 808 282 800L252 787M282 800V880M320 785V865M308 770V850M316 800V850"/>
                            <path d="M173 785L71 911V957L173 829M71 911L149 951M71 957L180 1015Q194 1025 192 1040 180 1058 155 1050L121 1033V954M149 913L180 930Q195 940 192 958 180 975 155 968L121 954 87 997 88 1082 121 1035M153 967V1048M182 932V1015M190 945V1035M87 997L192 1052"/>
                        </g>
                        <path d="M394 1625V1672L426 1640M394 1672L445 1692" stroke="#5c5c5c" stroke-width="2"/>
                        <g class="axis-name"><text x="397" y="1627">z</text><text x="429" y="1641">y</text><text x="448" y="1694">x</text></g>
                    </svg>
                    <div class="view-name">Prospettica</div>
                </div>
            </section>

            <aside class="right">
                <div class="strip icons">
                    <button class="current"><svg><use href="#layers"/></svg></button>
                    <button><svg><use href="#target"/></svg></button>
                    <button><svg><use href="#page"/></svg></button>
                    <button><svg><use href="#cube"/></svg></button>
                    <button><svg><use href="#camera"/></svg></button>
                    <button><svg><use href="#cplane"/></svg></button>
                    <button><svg><use href="#scroll"/></svg></button>
                    <button><svg><use href="#win"/></svg></button>
                    <button><svg><use href="#monitor"/></svg></button>
                    <button class="help">?</button>
                </div>
                <div class="layer-box">
                    <table>
                        <thead>
                            <tr><th class="c-name">Nome</th><th class="c-radio"></th><th class="c-on"></th><th class="c-lock"></th><th class="c-col"></th><th class="c-mat"></th><th class="c-type">Tipo di...</th><th class="c-print"></th></tr>
                        </thead>
                        <tbody id="layerRows"></tbody>
                    </table>
                </div>
                <div class="htrack layer-scroll"><i></i></div>
                <div class="layer-actions">
                    <div class="pair"><button aria-label="Aggiungi"><svg width="24" height="24" viewBox="0 0 24 24"><path d="M12 1v22M1 12h22" stroke="#444" stroke-width="2"/></svg></button><button aria-label="Rimuovi" disabled><svg width="24" height="24" viewBox="0 0 24 24"><path d="M1 12h22" stroke="#ccc" stroke-width="2"/></svg></button></div>
                    <button class="gear" aria-label="Opzioni"><svg width="22" height="22" viewBox="0 0 22 22"><circle cx="11" cy="11" r="5" fill="none" stroke="#222" stroke-width="5"/><path d="M11 0v5M11 17v5M0 11h5M17 11h5M3 3l4 4M15 15l4 4M19 3l-4 4M7 15l-4 4" stroke="#222" stroke-width="4"/></svg><svg width="14" height="10" viewBox="0 0 14 10"><path d="M1 2l6 6 6-6" fill="none" stroke="#444" stroke-width="2"/></svg></button>
                </div>
                <div class="strip icons second">
                    <button><svg><use href="#layers"/></svg></button>
                    <button><svg><use href="#target"/></svg></button>
                    <button><svg><use href="#page"/></svg></button>
                    <button><svg><use href="#cube"/></svg></button>
                    <button><svg><use href="#camera"/></svg></button>
                    <button><svg><use href="#cplane"/></svg></button>
                    <button><svg><use href="#scroll"/></svg></button>
                    <button class="current"><svg><use href="#win"/></svg></button>
                    <button><svg><use href="#monitor"/></svg></button>
                    <button class="help">?</button>
                </div>
                <div class="props">
                    <div class="props-body">
                        <section class="view-info">
                            <div class="row"><label for="titolo">Titolo:</label><input class="wide" id="titolo" type="text" value="Prospettica"></div>
                            <div class="row size"><span class="lbl">Dimensione:</span><span>977 x 767</span></div>
                        </section>
                        <section class="proj">
                            <h3>Proiezione</h3>
                            <label><input type="radio" name="proj">Parallela</label>
                            <label><input type="radio" name="proj" checked>Prospettica</label>
                            <label><input type="radio" name="proj">Prospettica a due punti</label>
                        </section>
                        <section class="bg">
                            <h3>Sfondo</h3>
                            <div class="picker"><select aria-label="Sfondo"><option>(none)</option></select><svg class="steps" viewBox="0 0 14 26"><path d="M2 9l5-6 5 6M2 17l5 6 5-6"/></svg></div>
                            <label><input type="checkbox" disabled>Mostra sfondo</label>
                            <label><input type="checkbox" disabled>Mostra sfondo in scala di grigio</label>
                        </section>
                        <section class="cam">
                            <h3>Camera</h3>
                            <div class="row"><label for="focale">Lunghezza focale:</label><input id="focale" type="text" value="50"></div>
                            <div class="row"><label for="rot">Rotazione:</label><input id="rot" type="text" value="0"></div>
                            <div class="row"><label for="posx">Posizione X:</label><input id="posx" type="text" value="68.36"></div>
                            <div class="row"><label></label><input type="text" aria-label="Posizione Y"></div>
                        </section>
                    </div>
                    <div class="vtrack"><i></i></div>
                </div>
            </aside>
        </main>

        <footer class="statusbar">
            <svg width="28" height="20" viewBox="0 0 28 20"><path d="M0 1h28M0 7h28M0 13h28M0 19h28" stroke="#555" stroke-width="2"/></svg>
            <span class="command">Command: _Dim</span>
            <span class="units">Millimeters</span>
            <span class="plane"><select aria-label="Piano"><option>PianoC</option></select><svg class="steps" viewBox="0 0 14 26"><path d="M2 9l5-6 5 6M2 17l5 6 5-6"/></svg></span>
            <span class="coord">X: 22.302</span>
            <span class="coord y">Y: 27.085</span>
            <span class="coord z">Z: 0.000</span>
        </footer>
    </div>
    <script src="script.js"></script>
</body>
</html>
```
FILE: styles.css
```css
* {
    box-sizing: border-box;
}
body {
    margin: 0;
    height: 100vh;
    display: flex;
    flex-direction: column;
    overflow: hidden;
    background: linear-gradient(#000 190px, #858585 200px, #858585 92%, #111 98%);
    font-family: Inter, "Liberation Sans", sans-serif;
    font-size: 22px;
    font-variant-ligatures: no-contextual;
    color: #1c1c1c;
}
button {
    border: 0;
    padding: 0;
    background: none;
    font: inherit;
    color: inherit;
}
a {
    color: inherit;
    text-decoration: none;
}
h3 {
    margin: 0;
    font-size: 22px;
    font-weight: 400;
    color: #000;
}
.defs {
    position: absolute;
}

/* menu bar */
.menubar {
    flex: none;
    height: 44px;
    padding: 0 44px 0 40px;
    display: flex;
    align-items: center;
    gap: 38px;
    background: #1e1e1e;
    color: #fff;
    font-size: 27px;
    white-space: nowrap;
}
.menubar svg {
    flex: none;
}
.apple {
    width: 28px;
    height: 34px;
}
.menubar .app {
    font-size: 28px;
    font-weight: 700;
}
.status {
    margin-left: auto;
    display: flex;
    align-items: center;
}
.charge {
    margin-left: 22px;
    font-size: 24px;
}
.battery {
    margin: 0 36px 0 8px;
}
.clock {
    margin-left: 14px;
}
.find {
    margin-left: 42px;
}
.siri {
    margin: 0 22px 0 34px;
}

/* window */
.window {
    flex: 1;
    min-height: 0;
    margin-right: 4px;
    display: flex;
    flex-direction: column;
    border-radius: 10px;
    overflow: hidden;
    background: #ececec;
}
.titlebar {
    flex: none;
    height: 114px;
    border-top: 2px solid #f6f6f6;
    border-bottom: 2px solid #a8a8a8;
    background: linear-gradient(#e8e6e8, #cfcfcf);
}
.title-row {
    height: 42px;
    padding: 0 16px;
    display: flex;
    align-items: center;
}
.lights {
    width: 200px;
    display: flex;
    gap: 16px;
}
.light {
    width: 24px;
    height: 24px;
    border-radius: 50%;
    background: #8e8e92;
    border: 1px solid #77777a;
}
.dirty {
    background: radial-gradient(#222 4px, #8e8e92 5px);
}
.title {
    flex: 1;
    padding-right: 172px;
    text-align: center;
    font-size: 26px;
    color: #3c3c3c;
}
.title span {
    color: #9c9c9c;
}
.toolbar {
    height: 64px;
    padding: 0 28px;
    display: flex;
    align-items: center;
}
.panel-btn {
    width: 40px;
    height: 40px;
}
.panel-btn svg {
    display: block;
}
.mode {
    height: 30px;
    margin-left: 38px;
    border-radius: 6px;
    font-size: 25px;
    font-weight: 600;
    color: #4a4a4a;
    line-height: 28px;
}
.panel-btn + .mode {
    margin-left: 129px;
}
.mode.on {
    padding: 0 22px;
    background: #878787;
    color: #fff;
}
.mode.orto {
    padding: 0 32px;
}
.mode.on + .mode.on {
    margin-left: 17px;
}
.right-tools {
    margin-left: auto;
    margin-right: 466px;
    display: flex;
    align-items: center;
    gap: 19px;
}
.layer-btn {
    width: 386px;
    height: 38px;
    padding: 0 11px;
    display: flex;
    align-items: center;
    border-radius: 8px;
    background: linear-gradient(#fff, #f1f1f1);
    box-shadow: 0 1px 1px #999;
    color: #444;
    line-height: 34px;
}
.layer-btn i {
    width: 28px;
    height: 28px;
    background: #000;
}
.layer-btn span {
    flex: 1;
}

/* columns */
.work {
    flex: 1;
    min-height: 0;
    display: flex;
}
.strip {
    flex: none;
    height: 52px;
    border-bottom: 2px solid #cfcfcf;
    background: linear-gradient(#f9f9f9, #e0dfe0);
}
.left {
    flex: none;
    width: 322px;
    display: flex;
    flex-direction: column;
    border-right: 3px solid #848484;
}
.cmd {
    padding: 21px 17px 15px;
}
.cmd input {
    display: block;
    width: 286px;
    height: 42px;
    padding: 4px 7px 0;
    border: 2px solid #bcbcbc;
    font: inherit;
    font-size: 25px;
}
.cmd input::placeholder {
    color: #b9b9b9;
}
.tools {
    flex: 1;
    display: grid;
    grid-template-columns: repeat(5, 60px);
    grid-auto-rows: 60px;
}
.tools svg {
    display: block;
    width: 60px;
    height: 60px;
    fill: none;
    stroke: #000;
    stroke-width: 5;
}
.tools use {
    stroke: none;
}
.tools .tee {
    font: bold 175px "Liberation Serif", serif;
    fill: #2f4bb5;
}
.tools .front {
    fill: #6a84fb;
}
.wheel circle {
    stroke-dasharray: 1 11;
}

/* radios and ticks */
input[type="radio"],
input[type="checkbox"] {
    appearance: none;
    flex: none;
    margin: 0;
    width: 28px;
    height: 28px;
    border: 1px solid #a8a8a8;
    border-radius: 50%;
    background: #fff;
    box-shadow: inset 0 2px 2px #ddd;
}
input[type="radio"]:checked {
    border-color: #97979b;
    background: radial-gradient(#fff 4px, #97979b 5px);
    box-shadow: none;
}
input[type="checkbox"] {
    width: 24px;
    height: 24px;
    border-radius: 5px;
}
input[type="checkbox"]:checked {
    border-color: #97979b;
    background: #97979b;
    box-shadow: none;
}
input[type="checkbox"]:checked::before {
    content: "";
    display: block;
    width: 8px;
    height: 14px;
    margin: 2px 0 0 8px;
    border: solid #fff;
    border-width: 0 3px 3px 0;
    transform: rotate(38deg);
}
input[type="checkbox"]:disabled {
    border-color: #cfcfcf;
    background: #f4f4f4;
    box-shadow: none;
}

.osnap {
    flex: none;
    height: 391px;
    display: grid;
    grid-template-columns: 1fr 27px;
    grid-template-rows: 1fr 27px;
    border-top: 3px solid #848484;
    background: #fafafa;
}
.osnap-list {
    padding: 9px 0 0 38px;
    overflow: hidden;
    border-right: 2px solid #e2e2e2;
    border-bottom: 2px solid #e2e2e2;
    background: #ececec;
}
.osnap-list label {
    height: 36px;
    display: flex;
    align-items: center;
    gap: 8px;
}
.osnap-list input[type="checkbox"] {
    margin: 0 2px;
}
.osnap-list .last-radio {
    margin-bottom: 11px;
}
.vtrack i,
.htrack i {
    display: block;
    border-radius: 8px;
    background: #c1c1c1;
}
.osnap .vtrack i {
    width: 16px;
    height: 156px;
    margin: 6px;
}
.osnap .htrack i {
    width: 274px;
    height: 16px;
    margin: 6px;
}

/* viewport */
.center {
    flex: 1;
    min-width: 0;
    display: flex;
    flex-direction: column;
}
.center .strip {
    border-color: #848484;
}
.views {
    display: flex;
    align-items: center;
    padding: 0 22px 0 15px;
    font-size: 25px;
    color: #4a4a4a;
}
.views button {
    height: 38px;
    margin-right: 24px;
}
.views svg {
    display: block;
}
.views a {
    height: 28px;
    padding: 0 41px 0 40px;
    line-height: 28px;
    border-left: 2px solid #8a8a8a;
}
.views .current {
    padding-right: 43px;
    color: #0a7cff;
}
.views .layout {
    margin: 0 0 0 auto;
    color: #1c1c1c;
    font-size: 24px;
}
.viewport {
    flex: 1;
    min-height: 0;
    position: relative;
    background: #9ca3ab;
}
.scene {
    position: absolute;
    width: 100%;
    height: 100%;
}
.wire path {
    stroke: #fff;
    stroke-width: 2;
    vector-effect: non-scaling-stroke;
}
.axis-name {
    fill: #5c5c5c;
    font-size: 22px;
}
.view-name {
    position: absolute;
    left: 2px;
    top: 2px;
    height: 40px;
    padding: 0 7px;
    border: 2px solid #1f4f85;
    background: #2b5d92;
    color: #fff;
    font-size: 24px;
    font-weight: 600;
    line-height: 38px;
}

/* right column */
.right {
    flex: none;
    width: 600px;
    display: flex;
    flex-direction: column;
    border-left: 2px solid #848484;
}
.icons {
    display: flex;
    justify-content: center;
    align-items: center;
}
.icons button {
    width: 48px;
    height: 40px;
    stroke: #505050;
}
.icons .current {
    stroke: #0a7cff;
}
.icons svg {
    display: block;
    width: 40px;
    height: 40px;
    margin: auto;
    fill: none;
    stroke-width: 2;
}
.icons .help {
    font: bold 40px/38px "DejaVu Sans", sans-serif;
    color: #505050;
}
.layer-box {
    flex: none;
    height: 645px;
    overflow: hidden;
    background: #fff;
    border-bottom: 2px solid #e4e4e4;
}
.layer-box table {
    width: 100%;
    table-layout: fixed;
    border-collapse: collapse;
}
.layer-box th {
    height: 43px;
    padding: 0 0 2px 8px;
    border-bottom: 1px solid #d0d0d0;
    background: linear-gradient(#ddd, #ddd) right center / 2px 34px no-repeat;
    text-align: left;
    font-weight: 400;
    color: #444;
}
.layer-box th:last-child {
    background: none;
}
.c-name {
    width: 212px;
}
.c-radio,
.c-on,
.c-lock {
    width: 46px;
}
.c-col {
    width: 60px;
}
.c-mat {
    width: 48px;
}
.c-type {
    width: 115px;
}
.layer-box td {
    height: 34px;
    padding: 0;
    text-align: center;
    white-space: nowrap;
}
.layer-box td > * {
    display: block;
    margin: 0 auto;
}
.layer-box td:first-child {
    padding-left: 38px;
    text-align: left;
}
.layer-box td:last-child > svg {
    width: 30px;
    height: 30px;
    margin: 0 0 0 5px;
}
.i-bulb {
    width: 28px;
    height: 30px;
}
.i-lock {
    width: 28px;
    height: 28px;
}
.i-mat {
    width: 24px;
    height: 24px;
}
.dim {
    opacity: 0.45;
}
.swatch {
    width: 28px;
    height: 28px;
    border: 2px solid #000;
}
select {
    appearance: none;
    border: 0;
    padding: 0;
    background: none;
    font: inherit;
    color: inherit;
}
.steps {
    flex: none;
    width: 14px;
    height: 26px;
    fill: none;
    stroke: #444;
    stroke-width: 2;
}
.layer-box .type {
    display: flex;
    align-items: center;
    padding: 4px 6px 0 12px;
}
.type select {
    flex: 1;
    min-width: 0;
}
.layer-scroll {
    flex: none;
    height: 31px;
    border-bottom: 2px solid #d6d6d6;
    background: #fafafa;
}
.layer-scroll i {
    width: 543px;
    height: 16px;
    margin: 7px 6px;
}
.layer-actions {
    flex: none;
    height: 64px;
    padding: 0 0 3px 38px;
    display: flex;
    align-items: center;
    gap: 34px;
}
.pair,
.gear {
    height: 34px;
    display: flex;
    align-items: center;
    justify-content: space-evenly;
    border-radius: 7px;
    background: #fcfcfc;
    box-shadow: 0 0 2px #aaa;
}
.pair {
    width: 93px;
    justify-content: center;
    gap: 20px;
}
.pair svg {
    display: block;
}
.gear {
    width: 69px;
}
.second {
    height: 55px;
    border-top: 3px solid #848484;
}
.props {
    flex: 1;
    min-height: 0;
    display: flex;
    color: #000;
}
.props-body {
    flex: 1;
    overflow: hidden;
}
.props .vtrack {
    width: 30px;
    border-left: 2px solid #e2e2e2;
    background: #fafafa;
}
.props .vtrack i {
    width: 16px;
    height: 482px;
    margin: 6px;
}
.props section {
    border-bottom: 2px solid #d4d4d4;
}
.props h3 {
    padding-left: 40px;
    line-height: 28px;
}
.row {
    height: 54px;
    display: flex;
    align-items: center;
}
.row label,
.row .lbl {
    width: 217px;
    margin-right: 18px;
    text-align: right;
}
.row input {
    width: 118px;
    height: 36px;
    padding: 2px 6px 0;
    border: 1px solid #b0b0b0;
    background: #fff;
    font: inherit;
    color: #1c1c1c;
}
.row .wide {
    width: 292px;
}
.row.size {
    height: 46px;
}
.view-info {
    height: 124px;
    padding-top: 9px;
}
.proj {
    height: 184px;
    padding-top: 16px;
}
.proj h3 {
    margin-bottom: 3px;
}
.proj label {
    height: 36px;
    padding-left: 178px;
    display: flex;
    align-items: center;
    gap: 8px;
}
.bg {
    height: 206px;
    padding-top: 16px;
}
.picker {
    height: 44px;
    margin-top: 8px;
    padding: 0 37px 0 86px;
    display: flex;
    align-items: center;
    justify-content: space-between;
    color: #777;
}
.bg label {
    height: 40px;
    padding-left: 72px;
    display: flex;
    align-items: center;
    gap: 10px;
    color: #b0b0b0;
}
.cam {
    padding-top: 16px;
}
.cam h3 {
    margin-bottom: 8px;
}

/* status bar */
.statusbar {
    flex: none;
    height: 57px;
    padding: 2px 0 0 9px;
    display: flex;
    align-items: center;
    border-top: 2px solid #cfcfcf;
    background: linear-gradient(#dadada, #cfcfcf);
    color: #000;
}
.command {
    margin-left: 5px;
}
.units {
    margin-left: auto;
    color: #222;
}
.plane {
    width: 140px;
    height: 32px;
    margin: 0 28px 0 32px;
    padding: 0 8px 0 12px;
    display: flex;
    align-items: center;
    justify-content: space-between;
    border: 2px solid #989898;
    border-radius: 8px;
}
.plane .steps {
    stroke: #888;
}
.coord {
    width: 164px;
}
.coord.y {
    width: 171px;
}
.coord.z {
    width: 371px;
}
```
FILE: script.js
```javascript
// ground plane, one unit per major line
function project(u, v) {
    const w = 1 - 0.03648 * u + 0.0568 * v;
    const x = (546 + 194.95 * u + 226 * v) / w;
    const y = (953 + 61.2 * u - 98.5 * v) / w;
    return x.toFixed(1) + ' ' + y.toFixed(1);
}

function line(u1, v1, u2, v2) {
    return 'M' + project(u1, v1) + 'L' + project(u2, v2);
}

let minor = '';
let major = '';
for (let i = -80; i <= 140; i++) {
    const k = i / 10;
    let d = '';
    if (k <= 10) d += line(k, -5, k, 14);
    if (k >= -5) d += line(-8, k, 10, k);
    if (i % 10 === 0) major += d;
    else minor += d;
}
document.getElementById('minor').setAttribute('d', minor);
document.getElementById('major').setAttribute('d', major);
document.getElementById('axisX').setAttribute('d', line(0, 0, 10, 0));
document.getElementById('axisY').setAttribute('d', line(0, 0, 0, 14));

const layers = [
    ['Default', '#000'],
    ['Livello 01', '#ff2600'],
    ['Livello 02', '#9040d8'],
    ['Livello 03', '#0433ff'],
    ['Livello 04', '#008f00'],
    ['Livello 05', '#fff'],
    ['1', '#000'],
    ['0', '#000'],
    ['CONSTRUCTI...', '#000'],
    ['PATTERN_CL...', '#000']
];

document.getElementById('layerRows').innerHTML = layers.map(([name, color], i) => `
    <tr>
        <td>${name}</td>
        <td><input type="radio" name="layer" aria-label="${name}" ${i === 0 ? 'checked' : ''}></td>
        <td><svg class="i-bulb ${i === 0 ? 'dim' : ''}"><use href="#bulb"/></svg></td>
        <td><svg class="i-lock ${i === 0 ? 'dim' : ''}"><use href="#lock"/></svg></td>
        <td><div class="swatch" style="background:${color}"></div></td>
        <td><svg class="i-mat"><use href="#mat"/></svg></td>
        <td><div class="type"><select aria-label="Tipo di linea"><option>Conti...</option></select><svg class="steps" viewBox="0 0 14 26"><path d="M2 9l5-6 5 6M2 17l5 6 5-6"/></svg></div></td>
        <td><svg viewBox="0 0 30 30"><path d="M15 1L29 15 15 29 1 15z" fill="${color}" stroke="#000" stroke-width="2"/></svg></td>
    </tr>`).join('');
```
